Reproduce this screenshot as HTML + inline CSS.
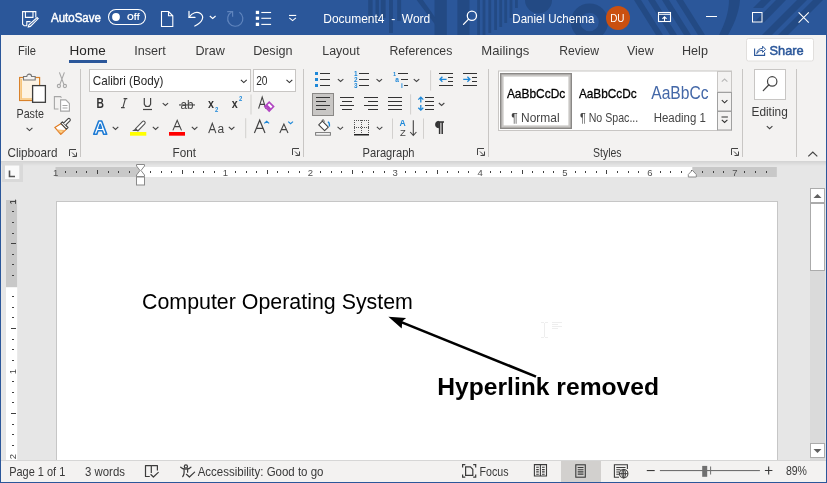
<!DOCTYPE html>
<html><head><meta charset="utf-8"><style>
html,body{margin:0;padding:0;width:827px;height:483px;overflow:hidden;background:#e6e6e6}
svg{display:block;font-family:"Liberation Sans",sans-serif;will-change:transform}
</style></head><body>
<svg width="827" height="483" viewBox="0 0 827 483">
<rect x="0" y="0" width="827" height="483" fill="#e6e6e6"/>
<rect x="0" y="0" width="827" height="35" fill="#2b579a"/>
<rect x="0" y="35" width="827" height="126" fill="#f3f2f1"/>
<defs><linearGradient id="rsh" x1="0" y1="0" x2="0" y2="1"><stop offset="0" stop-color="#d2d2d2"/><stop offset="1" stop-color="#e6e6e6"/></linearGradient></defs>
<rect x="0" y="161" width="827" height="5" fill="url(#rsh)"/>
<g fill="#234a84"><clipPath id="tbclip"><rect x="0" y="0" width="827" height="35"/></clipPath><g clip-path="url(#tbclip)"><rect x="368.2" y="0" width="4.4" height="21"/><rect x="375.5" y="0" width="3.4" height="21"/><rect x="380.8" y="0" width="4.8" height="18"/><rect x="389" y="0" width="3.9" height="33"/><rect x="397.2" y="0" width="3.9" height="21"/><rect x="434.5" y="0" width="12.3" height="35"/><rect x="457.4" y="0" width="12.1" height="35"/><path d="M416.6 0 H422.9 L437 20 V27 Z"/><rect x="477.2" y="0" width="2.8" height="35"/><rect x="482.6" y="0" width="2.8" height="35"/><rect x="488.4" y="0" width="2.8" height="33"/><rect x="494.2" y="0" width="2.8" height="30"/><rect x="499.3" y="0" width="2.8" height="27"/><rect x="504.3" y="0" width="2.8" height="23"/><rect x="509.6" y="0" width="2.8" height="18"/><rect x="515" y="0" width="2.8" height="8"/><path d="M525 0 A13.5 13.5 0 0 0 552 0 Z"/><path fill-rule="evenodd" d="M589.5 3.4 A18.6 18.6 0 1 1 589.5 40.6 A18.6 18.6 0 1 1 589.5 3.4 Z M589.5 12.7 A9.3 9.3 0 1 0 589.5 31.3 A9.3 9.3 0 1 0 589.5 12.7 Z"/><path d="M634 0 H641 L663 35 H656 Z"/><path d="M648 0 H655 L677 35 H670 Z"/><path d="M662 0 H669 L691 35 H684 Z"/><path d="M676 0 H683 L705 35 H698 Z"/><path d="M729 0 H740 C739 14 733 26 728 35 H719 C724 25 729 13 729 0 Z"/><path d="M761 0 H771 L763 8 H753 Z"/><path d="M776 0 H786 L764 22.5 H754 Z"/><path d="M797 0 H807 L772 35 H762 Z"/><path d="M813 0 H823 L788 35 H778 Z"/></g></g>
<g fill="none" stroke="#fff" stroke-width="1.1"><path d="M35.8 17.5 V11.6 H22.6 V24.2 L24.2 25.8 H26.8 V21.6 H30.5"/><path d="M25.4 11.6 V17.4 H33 V11.6"/></g>
<path d="M37.2 17.6 L38.2 18.6 L30.4 26.4 L28.3 27 L28.9 24.9 Z" fill="none" stroke="#fff" stroke-width="1.1"/>
<rect x="108.5" y="9.5" width="37" height="15" rx="7.5" fill="none" stroke="#fff" stroke-width="1.1"/>
<circle cx="116" cy="17" r="3.9" fill="#fff"/>
<text x="0" y="0" transform="translate(127.00,20.40) scale(0.9565,1)" style="font-size:9.16px;font-weight:bold;white-space:pre" fill="#fff" >Off</text>
<path d="M161.5 11.5 H168.5 L172.8 15.8 V26.5 H161.5 Z M168.5 11.5 V15.8 H172.8" fill="none" stroke="#fff" stroke-width="1.1"/>
<g fill="none" stroke="#fff" stroke-width="1.2" stroke-linecap="round"><path d="M189.2 17.2 C192 12.5 197 11.2 200.5 13.5 C204.5 16.5 203 22 194.8 26"/><path d="M189 11.3 V17.4 H195"/></g>
<path d="M209.8 16 L212.7 18.5 L215.6 16" fill="none" stroke="#fff" stroke-width="1.1"/>
<g fill="none" stroke="#5f84bd" stroke-width="1.2"><path d="M239.4 12.3 A7.6 7.6 0 1 1 231.6 12"/><path d="M227.2 11.6 H232.6 V16.8"/></g>
<rect x="255.8" y="10.8" width="3.3" height="3.3" fill="#fff"/>
<rect x="261.3" y="11.95" width="9.8" height="1.1" fill="#fff"/>
<rect x="255.8" y="16.6" width="3.3" height="3.3" fill="#fff"/>
<rect x="261.3" y="17.75" width="9.8" height="1.1" fill="#fff"/>
<rect x="255.8" y="22.7" width="3.3" height="3.3" fill="#fff"/>
<rect x="261.3" y="23.85" width="9.8" height="1.1" fill="#fff"/>
<rect x="289" y="14.9" width="7.2" height="1.1" fill="#fff"/>
<path d="M289.3 17.8 L292.6 20.6 L295.9 17.8" fill="none" stroke="#fff" stroke-width="1.1"/>
<circle cx="471.9" cy="15.7" r="4.6" fill="none" stroke="#fff" stroke-width="1.3"/>
<path d="M468.6 19.1 L463.5 24.4" stroke="#fff" stroke-width="1.3" stroke-linecap="round"/>
<rect x="658.5" y="12.5" width="12" height="9" fill="none" stroke="#fff" stroke-width="1.1"/>
<rect x="658.5" y="13.8" width="12" height="1" fill="#fff"/>
<path d="M664.5 21.5 V16.8 M662.4 18.8 L664.5 16.8 L666.6 18.8" fill="none" stroke="#fff" stroke-width="1.1"/>
<rect x="706" y="16" width="11" height="1" fill="#fff"/>
<rect x="752.5" y="12.5" width="9.5" height="9.5" fill="none" stroke="#fff" stroke-width="1"/>
<path d="M798.6 12.4 L808.8 22.6 M808.8 12.4 L798.6 22.6" stroke="#fff" stroke-width="1.1"/>
<text x="0" y="0" transform="translate(51.00,21.70) scale(0.9217,1)" style="font-size:12.50px;white-space:pre" fill="#fff" stroke="#fff" stroke-width="0.45">AutoSave</text>
<text x="0" y="0" transform="translate(323.30,23.00) scale(0.9160,1)" style="font-size:13.08px;white-space:pre" fill="#fff" >Document4  -  Word</text>
<text x="0" y="0" transform="translate(512.30,23.00) scale(0.8825,1)" style="font-size:13.08px;white-space:pre" fill="#fff" >Daniel Uchenna</text>
<circle cx="618" cy="18" r="12" fill="#ca5010"/>
<text x="0" y="0" transform="translate(610.20,21.90) scale(0.8990,1)" style="font-size:11.05px;white-space:pre" fill="#fff" >DU</text>
<text x="0" y="0" transform="translate(18.00,54.50) scale(0.8547,1)" style="font-size:13.08px;white-space:pre" fill="#393939" >File</text>
<text x="0" y="0" transform="translate(69.60,54.50) scale(1.0336,1)" style="font-size:13.08px;white-space:pre" fill="#262626" >Home</text>
<text x="0" y="0" transform="translate(134.20,54.50) scale(0.9663,1)" style="font-size:13.08px;white-space:pre" fill="#393939" >Insert</text>
<text x="0" y="0" transform="translate(195.40,54.50) scale(0.9605,1)" style="font-size:13.08px;white-space:pre" fill="#393939" >Draw</text>
<text x="0" y="0" transform="translate(253.20,54.50) scale(0.9660,1)" style="font-size:13.08px;white-space:pre" fill="#393939" >Design</text>
<text x="0" y="0" transform="translate(322.30,54.50) scale(0.9505,1)" style="font-size:13.08px;white-space:pre" fill="#393939" >Layout</text>
<text x="0" y="0" transform="translate(389.40,54.50) scale(0.9410,1)" style="font-size:13.08px;white-space:pre" fill="#393939" >References</text>
<text x="0" y="0" transform="translate(481.30,54.50) scale(1.0019,1)" style="font-size:13.08px;white-space:pre" fill="#393939" >Mailings</text>
<text x="0" y="0" transform="translate(559.20,54.50) scale(0.9294,1)" style="font-size:13.08px;white-space:pre" fill="#393939" >Review</text>
<text x="0" y="0" transform="translate(627.00,54.50) scale(0.9467,1)" style="font-size:13.08px;white-space:pre" fill="#393939" >View</text>
<text x="0" y="0" transform="translate(682.00,54.50) scale(0.9648,1)" style="font-size:13.08px;white-space:pre" fill="#393939" >Help</text>
<rect x="69" y="60" width="38" height="3" fill="#2b579a"/>
<rect x="746.5" y="38.5" width="67" height="22.5" rx="2" fill="#fff" stroke="#e1dfdd"/>
<text x="0" y="0" transform="translate(769.50,54.50) scale(0.9806,1)" style="font-size:13.08px;white-space:pre" fill="#2b579a" stroke="#2b579a" stroke-width="0.5">Share</text>
<text x="0" y="0" transform="translate(7.50,156.70) scale(0.9684,1)" style="font-size:12.06px;white-space:pre" fill="#393939" >Clipboard</text>
<text x="0" y="0" transform="translate(172.50,156.70) scale(0.9740,1)" style="font-size:12.06px;white-space:pre" fill="#393939" >Font</text>
<text x="0" y="0" transform="translate(362.60,156.70) scale(0.9230,1)" style="font-size:12.06px;white-space:pre" fill="#393939" >Paragraph</text>
<text x="0" y="0" transform="translate(593.10,156.70) scale(0.8685,1)" style="font-size:12.06px;white-space:pre" fill="#393939" >Styles</text>
<text x="0" y="0" transform="translate(16.50,118.20) scale(0.8398,1)" style="font-size:12.79px;white-space:pre" fill="#393939" >Paste</text>
<text x="0" y="0" transform="translate(751.50,116.00) scale(0.9602,1)" style="font-size:12.35px;white-space:pre" fill="#393939" >Editing</text>
<rect x="80.0" y="69" width="1" height="88" fill="#c8c6c4"/>
<rect x="303.0" y="69" width="1" height="88" fill="#c8c6c4"/>
<rect x="488.0" y="69" width="1" height="88" fill="#c8c6c4"/>
<rect x="742.0" y="69" width="1" height="88" fill="#c8c6c4"/>
<rect x="796.0" y="69" width="1" height="88" fill="#c8c6c4"/>
<rect x="19.6" y="77.5" width="20" height="23" fill="#fdf3e3" stroke="#d9822b" stroke-width="1.2"/>
<path d="M21.2 79 V99 H38" fill="none" stroke="#f7c57a" stroke-width="1.6"/>
<path d="M23.5 80 V76.5 H26.8 A2.4 2.4 0 0 1 31.6 76.5 H35.2 V80 Z" fill="#f3f2f1" stroke="#777" stroke-width="1.1"/>
<rect x="32.6" y="85.6" width="12.8" height="16.7" fill="#fff" stroke="#3c3c3c" stroke-width="1.3"/>
<path d="M26.60 127.80 L29.50 130.60 L32.40 127.80" fill="none" stroke="#444" stroke-width="1.1"/>
<g fill="none" stroke="#a6a6a6" stroke-width="1.1"><path d="M59.4 72.4 L63.9 84.4 M64.4 72.4 L59.9 84.4"/><circle cx="58.9" cy="86" r="1.6"/><circle cx="64.9" cy="86" r="1.6"/></g>
<g fill="none" stroke="#a6a6a6" stroke-width="1.1"><path d="M58.5 109 H54.4 V96.6 H60.5 L61.5 97.6"/><path d="M60.6 99.9 H65.8 L69.4 103.5 V111.1 H60.6 Z" fill="#fff"/><path d="M62.5 105.5 H67.5 M62.5 108 H67.5"/></g>
<path d="M61.2 123.6 L54.8 127.4 L60.8 134.4 L66.4 129.1 Z" fill="#fff" stroke="#e07a1f" stroke-width="1.2" stroke-linejoin="round"/>
<path d="M56.5 129.5 L65 130 L60.8 133.6 Z" fill="#f6b26b"/>
<path d="M58.5 130.6 L62.8 130.8 L60.8 132.6 Z" fill="#f9dc8a"/>
<path d="M60.8 123.4 L62.4 121.8 L68 127.5 L66.4 129.1 Z" fill="#fff" stroke="#444" stroke-width="1.1" stroke-linejoin="round"/>
<path d="M63.6 123.2 L67.9 118.9 A1.4 1.4 0 0 1 69.9 120.9 L65.6 125.2" fill="#fff" stroke="#444" stroke-width="1.1"/>
<path d="M69.5 156 V149.5 H76" fill="none" stroke="#444" stroke-width="1"/><path d="M72 152.5 L76 156.5 M72.5 156.5 H76.5 V152.5" fill="none" stroke="#444" stroke-width="1"/>
<rect x="89.5" y="69.5" width="161" height="22" fill="#fff" stroke="#c8c6c4"/>
<rect x="253.5" y="69.5" width="42" height="22" fill="#fff" stroke="#c8c6c4"/>
<path d="M240.90 79.80 L243.80 82.60 L246.70 79.80" fill="none" stroke="#333" stroke-width="1.1"/>
<path d="M286.50 79.80 L289.40 82.60 L292.30 79.80" fill="none" stroke="#333" stroke-width="1.1"/>
<text x="0" y="0" transform="translate(92.80,84.80) scale(0.9443,1)" style="font-size:12.35px;white-space:pre" fill="#262626" >Calibri (Body)</text>
<text x="0" y="0" transform="translate(256.20,84.80) scale(0.8240,1)" style="font-size:12.35px;white-space:pre" fill="#262626" >20</text>
<text x="0" y="0" transform="translate(96.60,107.70) scale(0.7290,1)" style="font-size:14.10px;font-weight:bold;white-space:pre" fill="#333" >B</text>
<path d="M123.6 98.6 H127.3 M121 107.6 H124.7 M125.4 98.6 L122.9 107.6" fill="none" stroke="#444" stroke-width="1.1"/>
<path d="M144.3 98 V104.2 A3.3 3.3 0 0 0 150.6 104.2 V98" fill="none" stroke="#444" stroke-width="1.2"/>
<rect x="143" y="108.9" width="9" height="1.2" fill="#444"/>
<path d="M162.70 103.10 L165.40 105.50 L168.10 103.10" fill="none" stroke="#444" stroke-width="1.1"/>
<text x="0" y="0" transform="translate(180.50,108.90) scale(0.9760,1)" style="font-size:12.00px;white-space:pre" fill="#444" >ab</text>
<rect x="179" y="104.4" width="16" height="1.1" fill="#444"/>
<text x="0" y="0" transform="translate(207.90,107.70) scale(0.8056,1)" style="font-size:13.30px;font-weight:bold;white-space:pre" fill="#333" >x</text>
<text x="0" y="0" transform="translate(215.00,111.70) scale(0.7950,1)" style="font-size:7.41px;font-weight:bold;white-space:pre" fill="#1e88d8" >2</text>
<text x="0" y="0" transform="translate(231.80,107.70) scale(0.8056,1)" style="font-size:13.30px;font-weight:bold;white-space:pre" fill="#333" >x</text>
<text x="0" y="0" transform="translate(238.90,101.30) scale(0.8814,1)" style="font-size:6.69px;font-weight:bold;white-space:pre" fill="#1e88d8" >2</text>
<rect x="250.5" y="94.5" width="1" height="20" fill="#d2d0ce"/>
<path d="M258.6 108.6 L262.2 97 L265.8 108.6 M259.9 104.4 H264.6" fill="none" stroke="#444" stroke-width="1.1"/>
<path d="M264.8 106.6 L269.2 102.2 L273.6 106.6 L269.2 111 Z" fill="#fff" stroke="#b146c2" stroke-width="1.6"/>
<path d="M265.6 106.6 L267.4 104.8 L271.2 108.6 L269.2 110.4 Z" fill="#b146c2"/>
<path d="M93.7 134.2 L98.7 121 H101.7 L106.7 134.2 H103.6 L102.4 130.8 H98 L96.8 134.2 Z M98.9 128.2 H101.5 L100.2 124.3 Z" fill="#fff" stroke="#1e7bd4" stroke-width="1.6" stroke-linejoin="round"/>
<path d="M112.70 126.90 L115.50 129.50 L118.30 126.90" fill="none" stroke="#444" stroke-width="1.1"/>
<path d="M135.6 128.6 L142.4 121.6 A1.6 1.6 0 0 1 144.7 123.9 L137.9 130.9 Z" fill="#fff" stroke="#555" stroke-width="1.1"/>
<path d="M135.6 128.6 L132 131 L137.9 130.9 Z" fill="#555"/>
<rect x="130" y="132" width="16.3" height="3.7" fill="#ffff00"/>
<path d="M152.80 126.90 L155.60 129.50 L158.40 126.90" fill="none" stroke="#444" stroke-width="1.1"/>
<path d="M172.9 130.4 L177.2 120.3 L181.5 130.4 M174.4 126.6 H180" fill="none" stroke="#444" stroke-width="1.1"/>
<rect x="169" y="132" width="16" height="3.7" fill="#ff0000"/>
<path d="M191.80 126.90 L194.60 129.50 L197.40 126.90" fill="none" stroke="#444" stroke-width="1.1"/>
<path d="M208.7 133.1 L212.3 123.3 L215.9 133.1 M210 129.6 H214.6" fill="none" stroke="#444" stroke-width="1.1"/>
<text x="0" y="0" transform="translate(217.50,133.10) scale(0.8862,1)" style="font-size:13.50px;white-space:pre" fill="#444" >a</text>
<path d="M228.80 126.90 L231.60 129.50 L234.40 126.90" fill="none" stroke="#444" stroke-width="1.1"/>
<rect x="245.2" y="118.2" width="1" height="20" fill="#d2d0ce"/>
<path d="M254.4 133.1 L259.7 120.2 L265 133.1 M256.3 128.4 H263.1" fill="none" stroke="#444" stroke-width="1.2"/>
<path d="M264.3 123.4 L266.7 121.3 L269.1 123.4" fill="none" stroke="#1e88d8" stroke-width="1.2"/>
<path d="M279.8 133.1 L283.9 124 L288 133.1 M281.3 129.6 H286.5" fill="none" stroke="#444" stroke-width="1.1"/>
<path d="M288.2 121.6 L290.6 123.6 L293 121.6" fill="none" stroke="#1e88d8" stroke-width="1.2"/>
<path d="M292.5 155 V148.5 H299" fill="none" stroke="#444" stroke-width="1"/><path d="M295 151.5 L299 155.5 M295.5 155.5 H299.5 V151.5" fill="none" stroke="#444" stroke-width="1"/>
<rect x="315" y="72" width="3" height="3" fill="#1e88d8"/>
<rect x="320" y="73" width="10" height="1" fill="#333"/>
<rect x="315" y="78" width="3" height="3" fill="#1e88d8"/>
<rect x="320" y="79" width="10" height="1" fill="#333"/>
<rect x="315" y="84" width="3" height="3" fill="#1e88d8"/>
<rect x="320" y="85" width="10" height="1" fill="#333"/>
<path d="M337.85 79.10 L340.60 81.50 L343.35 79.10" fill="none" stroke="#444" stroke-width="1.1"/>
<text x="354" y="75.9" style="font-size:6.4px;font-weight:bold" fill="#1e88d8">1</text>
<rect x="359" y="73" width="10" height="1" fill="#333"/>
<text x="354" y="82.0" style="font-size:6.4px;font-weight:bold" fill="#1e88d8">2</text>
<rect x="359" y="79" width="10" height="1" fill="#333"/>
<text x="354" y="88.0" style="font-size:6.4px;font-weight:bold" fill="#1e88d8">3</text>
<rect x="359" y="85" width="10" height="1" fill="#333"/>
<path d="M376.55 79.10 L379.30 81.50 L382.05 79.10" fill="none" stroke="#444" stroke-width="1.1"/>
<text x="393" y="75.8" style="font-size:5.6px;font-weight:bold" fill="#1e88d8">1</text>
<text x="395.3" y="81.6" style="font-size:6.6px;font-weight:bold" fill="#1e88d8">a</text>
<text x="401" y="88" style="font-size:6.6px;font-weight:bold" fill="#1e88d8">i</text>
<rect x="398" y="73" width="10" height="1" fill="#333"/>
<rect x="401" y="79" width="7" height="1" fill="#333"/>
<rect x="404" y="85" width="4" height="1" fill="#333"/>
<path d="M413.75 79.10 L416.50 81.50 L419.25 79.10" fill="none" stroke="#444" stroke-width="1.1"/>
<rect x="430.1" y="70.3" width="1" height="20.3" fill="#d2d0ce"/>
<rect x="439" y="73" width="14" height="1" fill="#333"/>
<rect x="439" y="85" width="14" height="1" fill="#333"/>
<rect x="448" y="77" width="5" height="1" fill="#333"/>
<rect x="448" y="81" width="5" height="1" fill="#333"/>
<path d="M446.6 79.3 H439.90000000000003 M442.40000000000003 76.8 L439.90000000000003 79.3 L442.40000000000003 81.8" fill="none" stroke="#1e88d8" stroke-width="1.3"/>
<rect x="463" y="73" width="14" height="1" fill="#333"/>
<rect x="463" y="85" width="14" height="1" fill="#333"/>
<rect x="472" y="77" width="5" height="1" fill="#333"/>
<rect x="472" y="81" width="5" height="1" fill="#333"/>
<path d="M463.2 79.3 H469.9 M467.4 76.8 L469.9 79.3 L467.4 81.8" fill="none" stroke="#1e88d8" stroke-width="1.3"/>
<rect x="312.5" y="93.5" width="21" height="22" fill="#c8c6c4" stroke="#8a8886"/>
<rect x="316" y="97" width="14" height="1" fill="#333"/>
<rect x="316" y="101" width="10" height="1" fill="#333"/>
<rect x="316" y="105" width="14" height="1" fill="#333"/>
<rect x="316" y="109" width="10" height="1" fill="#333"/>
<rect x="340" y="97" width="14" height="1" fill="#333"/>
<rect x="342" y="101" width="10" height="1" fill="#333"/>
<rect x="340" y="105" width="14" height="1" fill="#333"/>
<rect x="342" y="109" width="10" height="1" fill="#333"/>
<rect x="364" y="97" width="14" height="1" fill="#333"/>
<rect x="368" y="101" width="10" height="1" fill="#333"/>
<rect x="364" y="105" width="14" height="1" fill="#333"/>
<rect x="368" y="109" width="10" height="1" fill="#333"/>
<rect x="388" y="97" width="14" height="1" fill="#333"/>
<rect x="388" y="101" width="14" height="1" fill="#333"/>
<rect x="388" y="105" width="14" height="1" fill="#333"/>
<rect x="388" y="109" width="14" height="1" fill="#333"/>
<rect x="410.1" y="94.3" width="1" height="20.2" fill="#d2d0ce"/>
<rect x="425" y="97" width="9" height="1" fill="#333"/>
<rect x="425" y="101" width="9" height="1" fill="#333"/>
<rect x="425" y="105" width="9" height="1" fill="#333"/>
<rect x="425" y="109" width="9" height="1" fill="#333"/>
<path d="M420.8 97.5 V102.6 M420.8 105 V110 M418.3 99.6 L420.8 97.1 L423.3 99.6 M418.3 107.7 L420.8 110.2 L423.3 107.7" fill="none" stroke="#1e88d8" stroke-width="1.3"/>
<path d="M438.85 103.00 L441.60 105.40 L444.35 103.00" fill="none" stroke="#444" stroke-width="1.1"/>
<path d="M322.4 121.2 L328.3 127.1 L324.6 130.6 L318.7 124.9 Z" fill="#fff" stroke="#444" stroke-width="1.1" stroke-linejoin="round"/>
<path d="M322.4 121.2 C321.5 119.5 323.8 119 324.5 121.5" fill="none" stroke="#444" stroke-width="1"/>
<path d="M327.8 122 C329.2 122.3 329.6 124 329.4 126.5" fill="none" stroke="#1e88d8" stroke-width="1.4"/>
<rect x="315.6" y="132.6" width="14.8" height="2.6" fill="#fff" stroke="#777" stroke-width="1"/>
<path d="M337.55 126.90 L340.30 129.30 L343.05 126.90" fill="none" stroke="#444" stroke-width="1.1"/>
<g fill="#555">
<rect x="354" y="120" width="1" height="1"/>
<rect x="354" y="127" width="1" height="1"/>
<rect x="356" y="120" width="1" height="1"/>
<rect x="356" y="127" width="1" height="1"/>
<rect x="358" y="120" width="1" height="1"/>
<rect x="358" y="127" width="1" height="1"/>
<rect x="360" y="120" width="1" height="1"/>
<rect x="360" y="127" width="1" height="1"/>
<rect x="362" y="120" width="1" height="1"/>
<rect x="362" y="127" width="1" height="1"/>
<rect x="364" y="120" width="1" height="1"/>
<rect x="364" y="127" width="1" height="1"/>
<rect x="366" y="120" width="1" height="1"/>
<rect x="366" y="127" width="1" height="1"/>
<rect x="368" y="120" width="1" height="1"/>
<rect x="368" y="127" width="1" height="1"/>
<rect x="354" y="120" width="1" height="1"/>
<rect x="361" y="120" width="1" height="1"/>
<rect x="368" y="120" width="1" height="1"/>
<rect x="354" y="122" width="1" height="1"/>
<rect x="361" y="122" width="1" height="1"/>
<rect x="368" y="122" width="1" height="1"/>
<rect x="354" y="124" width="1" height="1"/>
<rect x="361" y="124" width="1" height="1"/>
<rect x="368" y="124" width="1" height="1"/>
<rect x="354" y="126" width="1" height="1"/>
<rect x="361" y="126" width="1" height="1"/>
<rect x="368" y="126" width="1" height="1"/>
<rect x="354" y="128" width="1" height="1"/>
<rect x="361" y="128" width="1" height="1"/>
<rect x="368" y="128" width="1" height="1"/>
<rect x="354" y="130" width="1" height="1"/>
<rect x="361" y="130" width="1" height="1"/>
<rect x="368" y="130" width="1" height="1"/>
<rect x="354" y="132" width="1" height="1"/>
<rect x="361" y="132" width="1" height="1"/>
<rect x="368" y="132" width="1" height="1"/>
</g>
<rect x="354" y="134" width="15" height="1.5" fill="#222"/>
<path d="M376.85 126.90 L379.60 129.30 L382.35 126.90" fill="none" stroke="#444" stroke-width="1.1"/>
<rect x="392" y="118.5" width="1" height="20.3" fill="#d2d0ce"/>
<text x="399.6" y="126.4" style="font-size:8.6px;font-weight:bold" fill="#1e88d8">A</text>
<text x="399.9" y="135.8" style="font-size:9.4px" fill="#444">Z</text>
<path d="M413.3 120.2 V135.2 M410.2 132 L413.3 135.5 L416.4 132" fill="none" stroke="#444" stroke-width="1.1"/>
<rect x="423" y="118.5" width="1" height="20.3" fill="#d2d0ce"/>
<path d="M438.3 122 H444 M439.6 122 V134 M442.2 122 V134" fill="none" stroke="#333" stroke-width="1.5"/>
<path d="M438.8 121.3 A3.2 3.2 0 0 0 438.8 127.8 Z" fill="#333" stroke="#333" stroke-width="1"/>
<path d="M477.5 155 V148.5 H484" fill="none" stroke="#444" stroke-width="1"/><path d="M480 151.5 L484 155.5 M480.5 155.5 H484.5 V151.5" fill="none" stroke="#444" stroke-width="1"/>
<rect x="498.5" y="71" width="233" height="59.5" fill="#fff" stroke="#c8c6c4"/>
<rect x="717.5" y="71.5" width="14" height="59" fill="#f3f2f1"/>
<rect x="717.5" y="71.5" width="14" height="20.5" fill="#f3f2f1" stroke="#c8c6c4"/>
<rect x="717.5" y="92.5" width="14" height="18.5" fill="#f3f2f1" stroke="#a0a0a0"/>
<rect x="717.5" y="111.5" width="14" height="18.5" fill="#f3f2f1" stroke="#a0a0a0"/>
<path d="M721.8 81.7 L724.6 79 L727.4 81.7" fill="none" stroke="#b8b8b8" stroke-width="1.1"/>
<path d="M721.80 100.20 L724.60 102.80 L727.40 100.20" fill="none" stroke="#333" stroke-width="1.1"/>
<rect x="721.5" y="116.5" width="6.4" height="1" fill="#333"/>
<path d="M721.80 119.90 L724.60 122.50 L727.40 119.90" fill="none" stroke="#333" stroke-width="1.1"/>
<rect x="501" y="74" width="70" height="54" fill="#fff" stroke="#8a8886" stroke-width="2"/>
<rect x="502.5" y="75.5" width="67" height="51" fill="none" stroke="#c8c6c4" stroke-width="2.2"/>
<text x="0" y="0" transform="translate(506.90,98.10) scale(0.9145,1)" style="font-size:13.08px;white-space:pre" fill="#000" stroke="#000" stroke-width="0.3">AaBbCcDc</text>
<text x="0" y="0" transform="translate(511.30,122.00) scale(0.9454,1)" style="font-size:12.65px;white-space:pre" fill="#444" >¶ Normal</text>
<text x="0" y="0" transform="translate(578.90,98.10) scale(0.9036,1)" style="font-size:13.08px;white-space:pre" fill="#000" stroke="#000" stroke-width="0.3">AaBbCcDc</text>
<text x="0" y="0" transform="translate(580.00,122.00) scale(0.8413,1)" style="font-size:12.65px;white-space:pre" fill="#444" >¶ No Spac...</text>
<text x="0" y="0" transform="translate(651.20,99.40) scale(0.8555,1)" style="font-size:18.31px;white-space:pre" fill="#4468a8" >AaBbCc</text>
<text x="0" y="0" transform="translate(653.70,122.00) scale(0.9053,1)" style="font-size:12.65px;white-space:pre" fill="#444" >Heading 1</text>
<path d="M731.5 155 V148.5 H738" fill="none" stroke="#444" stroke-width="1"/><path d="M734 151.5 L738 155.5 M734.5 155.5 H738.5 V151.5" fill="none" stroke="#444" stroke-width="1"/>
<rect x="754.5" y="69.5" width="31" height="30" fill="#fff" stroke="#c8c6c4"/>
<circle cx="772.2" cy="81.4" r="4.7" fill="none" stroke="#444" stroke-width="1.2"/>
<path d="M768.9 84.8 L763.3 90.6" stroke="#444" stroke-width="1.3" stroke-linecap="round"/>
<path d="M766.80 126.10 L769.60 128.70 L772.40 126.10" fill="none" stroke="#444" stroke-width="1.1"/>
<path d="M808.3 156.4 L812.8 152 L817.3 156.4" fill="none" stroke="#444" stroke-width="1.2"/>
<path d="M754.6 48.6 V55.4 H764.6 V52.4" fill="none" stroke="#2b579a" stroke-width="1.1"/>
<path d="M756.8 53.6 C757.2 50.2 759.2 48.4 762.6 48.4 V46.2 L765.6 49.3 L762.6 52.4 V50.3 C760.4 50.3 758.2 51.3 756.8 53.6 Z" fill="none" stroke="#2b579a" stroke-width="1" stroke-linejoin="round"/>
<rect x="2" y="162" width="21" height="20" fill="#d9d9d9"/>
<rect x="5" y="165.5" width="14.3" height="13.5" fill="#fafafa"/>
<path d="M9.5 170.5 V176.5 H15" stroke="#555" stroke-width="1.6" fill="none"/>
<rect x="55.5" y="167" width="721.3" height="10" fill="#c8c8c8"/>
<rect x="140.5" y="167" width="551.8" height="10" fill="#fff"/>
<text x="55.6" y="175.5" text-anchor="middle" style="font-size:9.5px" fill="#505050">1</text><rect x="65" y="171" width="1" height="2" fill="#404040"/><rect x="76" y="171" width="1" height="2" fill="#404040"/><rect x="86" y="171" width="1" height="2" fill="#404040"/><rect x="97" y="170" width="1" height="4" fill="#404040"/><rect x="108" y="171" width="1" height="2" fill="#404040"/><rect x="118" y="171" width="1" height="2" fill="#404040"/><rect x="129" y="171" width="1" height="2" fill="#404040"/><rect x="150" y="171" width="1" height="2" fill="#404040"/><rect x="161" y="171" width="1" height="2" fill="#404040"/><rect x="171" y="171" width="1" height="2" fill="#404040"/><rect x="182" y="170" width="1" height="4" fill="#404040"/><rect x="193" y="171" width="1" height="2" fill="#404040"/><rect x="203" y="171" width="1" height="2" fill="#404040"/><rect x="214" y="171" width="1" height="2" fill="#404040"/><text x="225.4" y="175.5" text-anchor="middle" style="font-size:9.5px" fill="#505050">1</text><rect x="235" y="171" width="1" height="2" fill="#404040"/><rect x="246" y="171" width="1" height="2" fill="#404040"/><rect x="256" y="171" width="1" height="2" fill="#404040"/><rect x="267" y="170" width="1" height="4" fill="#404040"/><rect x="277" y="171" width="1" height="2" fill="#404040"/><rect x="288" y="171" width="1" height="2" fill="#404040"/><rect x="299" y="171" width="1" height="2" fill="#404040"/><text x="310.3" y="175.5" text-anchor="middle" style="font-size:9.5px" fill="#505050">2</text><rect x="320" y="171" width="1" height="2" fill="#404040"/><rect x="331" y="171" width="1" height="2" fill="#404040"/><rect x="341" y="171" width="1" height="2" fill="#404040"/><rect x="352" y="170" width="1" height="4" fill="#404040"/><rect x="362" y="171" width="1" height="2" fill="#404040"/><rect x="373" y="171" width="1" height="2" fill="#404040"/><rect x="384" y="171" width="1" height="2" fill="#404040"/><text x="395.2" y="175.5" text-anchor="middle" style="font-size:9.5px" fill="#505050">3</text><rect x="405" y="171" width="1" height="2" fill="#404040"/><rect x="415" y="171" width="1" height="2" fill="#404040"/><rect x="426" y="171" width="1" height="2" fill="#404040"/><rect x="437" y="170" width="1" height="4" fill="#404040"/><rect x="447" y="171" width="1" height="2" fill="#404040"/><rect x="458" y="171" width="1" height="2" fill="#404040"/><rect x="468" y="171" width="1" height="2" fill="#404040"/><text x="480.1" y="175.5" text-anchor="middle" style="font-size:9.5px" fill="#505050">4</text><rect x="490" y="171" width="1" height="2" fill="#404040"/><rect x="500" y="171" width="1" height="2" fill="#404040"/><rect x="511" y="171" width="1" height="2" fill="#404040"/><rect x="522" y="170" width="1" height="4" fill="#404040"/><rect x="532" y="171" width="1" height="2" fill="#404040"/><rect x="543" y="171" width="1" height="2" fill="#404040"/><rect x="553" y="171" width="1" height="2" fill="#404040"/><text x="565.0" y="175.5" text-anchor="middle" style="font-size:9.5px" fill="#505050">5</text><rect x="575" y="171" width="1" height="2" fill="#404040"/><rect x="585" y="171" width="1" height="2" fill="#404040"/><rect x="596" y="171" width="1" height="2" fill="#404040"/><rect x="606" y="170" width="1" height="4" fill="#404040"/><rect x="617" y="171" width="1" height="2" fill="#404040"/><rect x="628" y="171" width="1" height="2" fill="#404040"/><rect x="638" y="171" width="1" height="2" fill="#404040"/><text x="649.9" y="175.5" text-anchor="middle" style="font-size:9.5px" fill="#505050">6</text><rect x="660" y="171" width="1" height="2" fill="#404040"/><rect x="670" y="171" width="1" height="2" fill="#404040"/><rect x="681" y="171" width="1" height="2" fill="#404040"/><rect x="691" y="170" width="1" height="4" fill="#404040"/><rect x="702" y="171" width="1" height="2" fill="#404040"/><rect x="713" y="171" width="1" height="2" fill="#404040"/><rect x="723" y="171" width="1" height="2" fill="#404040"/><text x="734.8" y="175.5" text-anchor="middle" style="font-size:9.5px" fill="#505050">7</text><rect x="744" y="171" width="1" height="2" fill="#404040"/><rect x="755" y="171" width="1" height="2" fill="#404040"/><rect x="766" y="171" width="1" height="2" fill="#404040"/>
<path d="M136.5 164.5 H144.5 V166 L141 170.5 L144.5 175 V176.5 H136.5 V175 L140 170.5 L136.5 166 Z" fill="#fff" stroke="#8a8a8a" stroke-width="1"/>
<rect x="136.5" y="177" width="8" height="8" fill="#fff" stroke="#8a8a8a" stroke-width="1"/>
<path d="M688.3 177 V174.5 L692.3 170.2 L696.3 174.5 V177 Z" fill="#fff" stroke="#8a8a8a" stroke-width="1"/>
<rect x="6" y="200" width="11.2" height="260" fill="#fff"/>
<rect x="6" y="200" width="11.2" height="87.2" fill="#c8c8c8"/>
<text x="0" y="0" transform="translate(16,201.9) rotate(-90)" text-anchor="middle" style="font-size:9.5px" fill="#404040">1</text><rect x="12" y="211" width="2" height="1" fill="#404040"/><rect x="12" y="222" width="2" height="1" fill="#404040"/><rect x="12" y="233" width="2" height="1" fill="#404040"/><rect x="11" y="243" width="5" height="1" fill="#404040"/><rect x="12" y="254" width="2" height="1" fill="#404040"/><rect x="12" y="264" width="2" height="1" fill="#404040"/><rect x="12" y="275" width="2" height="1" fill="#404040"/><rect x="12" y="296" width="2" height="1" fill="#404040"/><rect x="12" y="307" width="2" height="1" fill="#404040"/><rect x="12" y="317" width="2" height="1" fill="#404040"/><rect x="11" y="328" width="5" height="1" fill="#404040"/><rect x="12" y="339" width="2" height="1" fill="#404040"/><rect x="12" y="349" width="2" height="1" fill="#404040"/><rect x="12" y="360" width="2" height="1" fill="#404040"/><text x="0" y="0" transform="translate(16,371.7) rotate(-90)" text-anchor="middle" style="font-size:9.5px" fill="#404040">1</text><rect x="12" y="381" width="2" height="1" fill="#404040"/><rect x="12" y="392" width="2" height="1" fill="#404040"/><rect x="12" y="402" width="2" height="1" fill="#404040"/><rect x="11" y="413" width="5" height="1" fill="#404040"/><rect x="12" y="424" width="2" height="1" fill="#404040"/><rect x="12" y="434" width="2" height="1" fill="#404040"/><rect x="12" y="445" width="2" height="1" fill="#404040"/><text x="0" y="0" transform="translate(16,456.6) rotate(-90)" text-anchor="middle" style="font-size:9.5px" fill="#404040">2</text>
<text x="0" y="0" transform="translate(16,201.8) rotate(-90)" text-anchor="middle" style="font-size:9.5px" fill="#404040">1</text>
<rect x="56.5" y="201.5" width="721" height="300" fill="#fff" stroke="#c6c6c6"/>
<g fill="#eeeeee"><rect x="541" y="322" width="3" height="1"/><rect x="545" y="322" width="3" height="1"/><rect x="544" y="323" width="1" height="14"/><rect x="541" y="337" width="3" height="1"/><rect x="545" y="337" width="3" height="1"/><rect x="552" y="322" width="10" height="1"/><rect x="552" y="324" width="6" height="1"/><rect x="552" y="326" width="10" height="1"/><rect x="552" y="328" width="6" height="1"/></g>
<rect x="810" y="203" width="15" height="257" fill="#dadada"/>
<rect x="810.5" y="188.5" width="14" height="14" fill="#fff" stroke="#ababab"/>
<path d="M813.5 198 L817.5 194 L821.5 198 Z" fill="#606060"/>
<rect x="810.5" y="203.5" width="14" height="67" fill="#fff" stroke="#ababab"/>
<rect x="810.5" y="443.5" width="14" height="14" fill="#fff" stroke="#ababab"/>
<path d="M813.5 449 L817.5 453 L821.5 449 Z" fill="#606060"/>
<text x="0" y="0" transform="translate(142.00,308.60) scale(1.0079,1)" style="font-size:21.22px;white-space:pre" fill="#000" >Computer Operating System</text>
<text x="0" y="0" transform="translate(437.30,395.30) scale(1.0209,1)" style="font-size:24.13px;font-weight:bold;white-space:pre" fill="#000" >Hyperlink removed</text>
<line x1="536" y1="376.6" x2="400" y2="321.6" stroke="#000" stroke-width="2.6"/>
<path d="M388.4 316.7 L406.1 318.1 L402.3 321.2 L401.7 328.6 Z" fill="#000"/>
<rect x="0" y="460" width="827" height="23" fill="#f3f2f1"/>
<rect x="0" y="460" width="827" height="1" fill="#d6d6d6"/>
<text x="0" y="0" transform="translate(9.20,475.50) scale(0.8886,1)" style="font-size:12.35px;white-space:pre" fill="#393939" >Page 1 of 1</text>
<text x="0" y="0" transform="translate(85.00,475.50) scale(0.9250,1)" style="font-size:12.35px;white-space:pre" fill="#393939" >3 words</text>
<text x="0" y="0" transform="translate(197.70,476.00) scale(0.9085,1)" style="font-size:12.65px;white-space:pre" fill="#393939" >Accessibility: Good to go</text>
<text x="0" y="0" transform="translate(479.50,476.00) scale(0.8431,1)" style="font-size:12.65px;white-space:pre" fill="#393939" >Focus</text>
<text x="0" y="0" transform="translate(785.90,475.00) scale(0.8539,1)" style="font-size:12.35px;white-space:pre" fill="#393939" >89%</text>
<rect x="561" y="461" width="40" height="21" fill="#d2d0ce"/>
<g fill="none" stroke="#3b3b3b" stroke-width="1.2" stroke-linejoin="round"><path d="M149.8 476.5 H145.5 V465.6 H151.3 V473"/><path d="M151.3 465.6 H157.4 V470.4"/><path d="M150.6 474.3 L153.4 477 L158.6 472.1"/></g>
<g fill="none" stroke="#3b3b3b" stroke-width="1.2" stroke-linecap="round" stroke-linejoin="round"><circle cx="185.9" cy="466.4" r="1.6"/><path d="M180.6 467.2 C182 469 184.2 469.2 185.9 469.2 C187.8 469.2 189.6 469 191 467.2"/><path d="M184 469.2 C184.4 472.5 184 475 182.7 476.5"/><path d="M187.6 469.2 V472.2"/><path d="M186.4 474.3 L189.4 477 L194.6 472.1"/></g>
<g fill="none" stroke="#3b3b3b" stroke-width="1.2"><path d="M462.6 467.4 V464.7 H465.3 M473.2 464.7 H475.7 V467.4 M475.7 474.5 V477.1 H473.2 M465.3 477.1 H462.6 V474.5"/><path d="M465.6 466.9 H470.4 L472.8 469.3 V475.3 H465.6 Z"/></g>
<g fill="none" stroke="#3b3b3b" stroke-width="1.1"><path d="M540.4 476 V464.6 M534.4 464.6 H546.5 V476 H534.4 Z"/><path d="M536.2 467.3 H538.8 M536.2 469.6 H538.8 M536.2 471.9 H538.8 M536.2 474.2 H538.8 M542 467.3 H544.7 M542 469.6 H544.7 M542 471.9 H544.7 M542 474.2 H544.7"/></g>
<g fill="none" stroke="#3b3b3b" stroke-width="1.1"><rect x="575.8" y="464.8" width="9.5" height="12.4"/><path d="M577.7 467.5 H583.5 M577.7 469.7 H583.5 M577.7 471.9 H583.5 M577.7 474.1 H583.5"/></g>
<g fill="none" stroke="#3b3b3b" stroke-width="1.1"><path d="M619 477.2 H614.4 V464.8 H627.4 V469"/><path d="M616.3 467.5 H625.5 M616.3 469.8 H620.5 M616.3 472 H619 M616.3 474.3 H619"/></g>
<circle cx="623.7" cy="473.7" r="4.2" fill="#fff" stroke="#3b3b3b" stroke-width="1.1"/>
<path d="M619.5 473.7 H627.9 M623.7 469.5 V477.9" stroke="#3b3b3b" stroke-width="1" fill="none"/>
<ellipse cx="623.7" cy="473.7" rx="1.8" ry="4.2" fill="none" stroke="#3b3b3b" stroke-width="1"/>
<rect x="646.8" y="470" width="7.9" height="1.1" fill="#3b3b3b"/>
<rect x="659.9" y="470" width="100" height="1.1" fill="#707070"/>
<rect x="702.2" y="465.9" width="5" height="10.9" fill="#707070"/>
<rect x="710.1" y="466.5" width="1" height="8" fill="#707070"/>
<path d="M764.9 470.5 H772.4 M768.65 466.6 V474.4" stroke="#3b3b3b" stroke-width="1.1" fill="none"/>
<rect x="0" y="0" width="1" height="483" fill="#2b579a"/>
<rect x="826" y="0" width="1" height="483" fill="#2b579a"/>
<rect x="0" y="482" width="827" height="1" fill="#2b579a"/>
</svg></body></html>
